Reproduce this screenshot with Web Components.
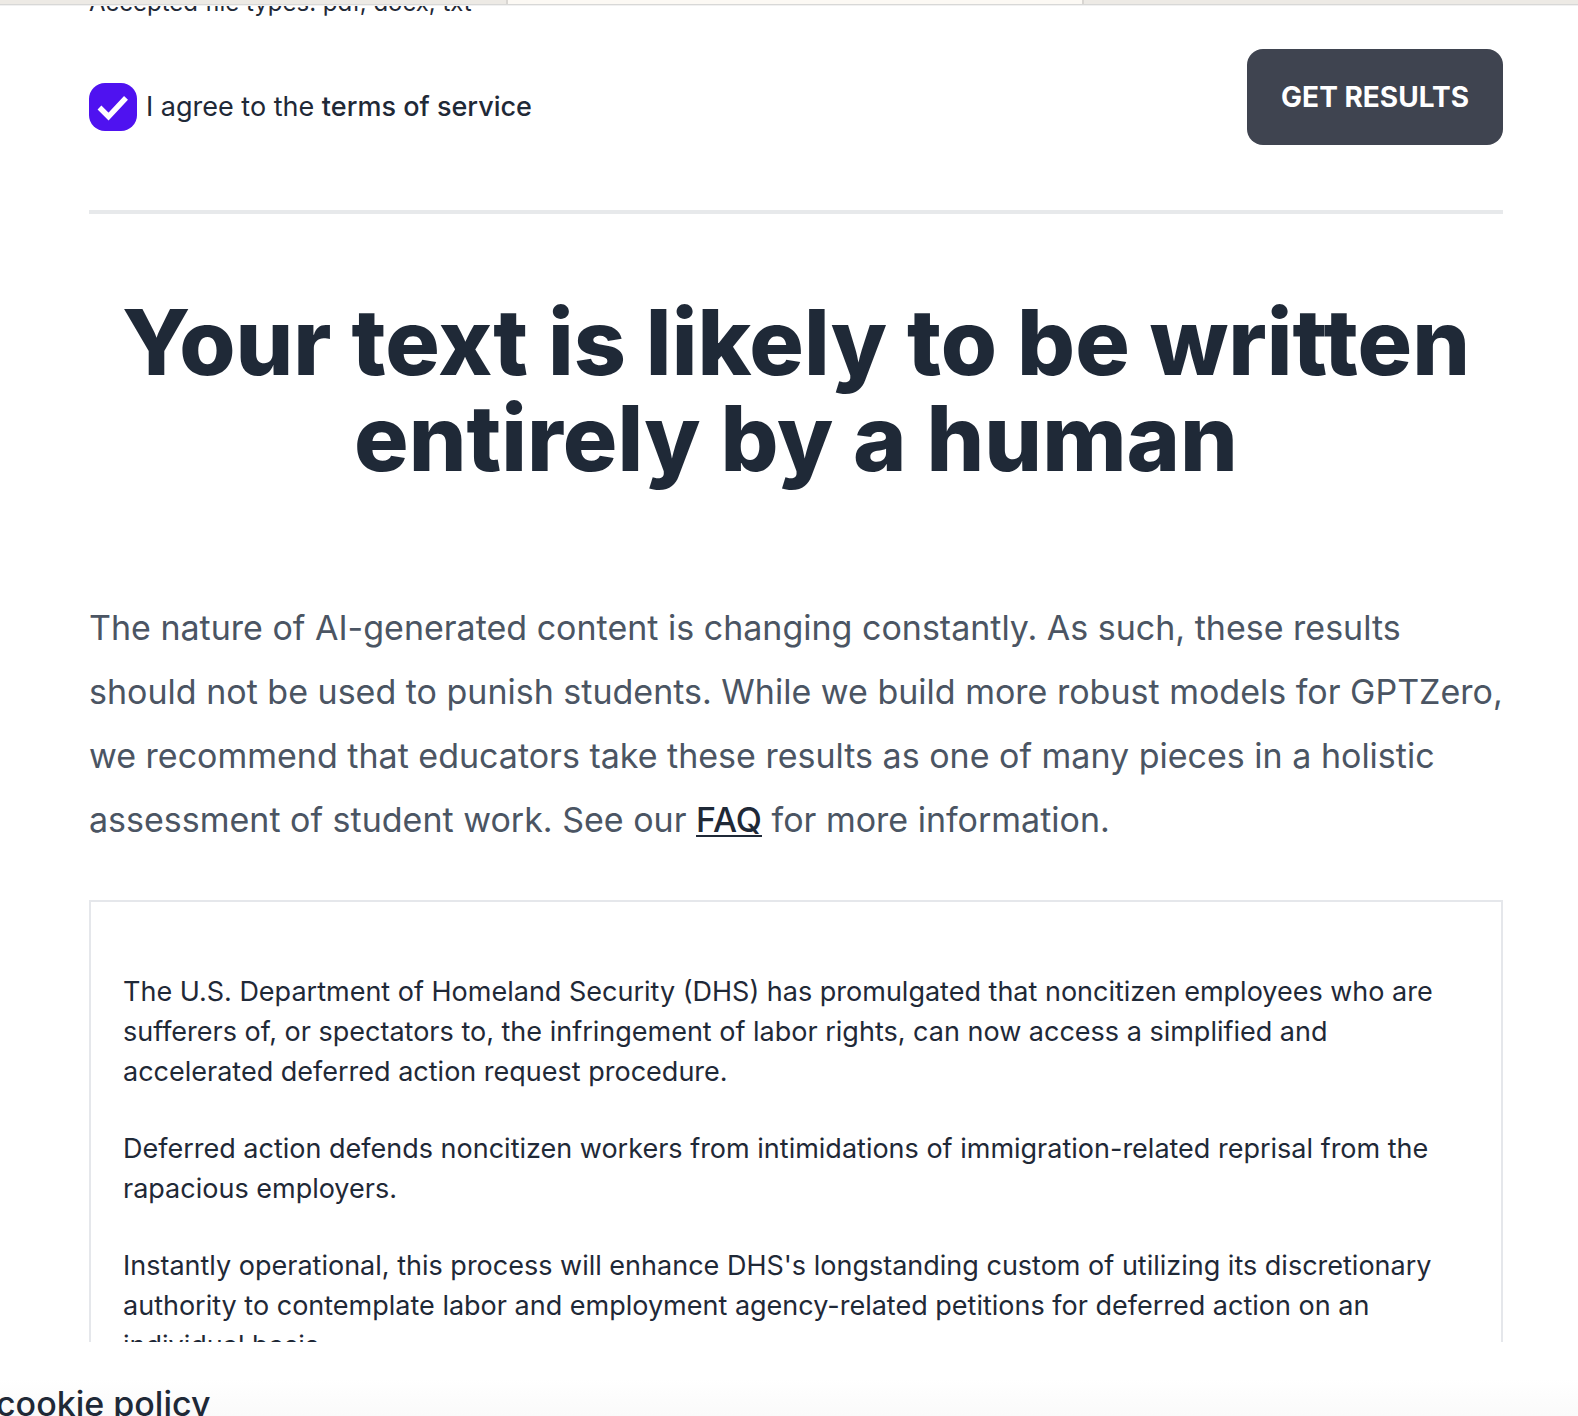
<!DOCTYPE html>
<html lang="en">
<head>
<meta charset="utf-8">
<title>Results</title>
<style>
html, body { margin: 0; height: 100%; }
body { background: #fff; color: #1f2937; font-family: Inter, "Liberation Sans", sans-serif; overflow: hidden; }
</style>
</head>
<body>
<results-page></results-page>
<script>
const define = (name, html) => customElements.define(name, class extends HTMLElement {
  constructor() {
    super();
    this.attachShadow({ mode: 'open' }).innerHTML = html;
  }
});

define('tab-strip', `
<style>
:host { display: grid; grid-template-columns: 506fr 578fr 494fr; flex: none; height: 4px; border-bottom: 1px solid #d8d8d7; box-shadow: 0 1px #f1f1f1; z-index: 1; }
.tab { background: #edeae5; }
.tab:first-child { background: linear-gradient(90deg, #efe9e3, #e3d9e3 35%, #e5dce4 60%, #edeae5 90%); }
.active { background: #fcf9f4; border: solid #d9d6d2; border-width: 0 2px; }
</style>
<div class="tab"></div><div class="tab active"></div><div class="tab"></div>`);

define('file-note', `
<style>
:host { display: flex; align-items: flex-end; height: 14px; overflow: hidden; font-size: 24px; line-height: 32px; }
</style>
<span><slot></slot></span>`);

define('terms-check', `
<style>
label { display: flex; align-items: center; gap: 9px; font-size: 27px; line-height: 40px; }
.box { display: grid; }
.box > * { grid-area: 1 / 1; }
input { appearance: none; margin: 0; width: 48px; height: 48px; border-radius: 16px; background: #4f12f0; }
svg { width: 48px; height: 48px; pointer-events: none; visibility: hidden; }
input:checked + svg { visibility: visible; }
a { color: inherit; font-weight: 500; text-decoration: none; }
</style>
<label>
  <span class="box"><input type="checkbox" checked><svg viewBox="0 0 48 48" fill="none" stroke="#fff" stroke-width="5.4"><path d="M10.5 24.5 19.5 33.5 37 14.8"/></svg></span>
  <span>I agree to the <a href="#terms">terms of service</a></span>
</label>`);

define('action-button', `
<style>
button { height: 96px; padding: 0 34px; border: 0; border-radius: 16px; background: #3f4450; color: #fff; font: 700 28px/40px Inter, sans-serif; text-transform: uppercase; white-space: nowrap; }
</style>
<button type="button"><slot></slot></button>`);

define('result-heading', `
<style>
h1 { margin: 0; font-size: 91px; line-height: 96px; font-weight: 800; text-align: center; }
</style>
<h1><slot></slot></h1>`);

define('result-notice', `
<style>
p { margin: 0; font-size: 34px; line-height: 64px; color: #4b5563; }
a { color: #1f2937; font-weight: 500; text-underline-offset: 3px; text-decoration-thickness: 2px; }
</style>
<p>The nature of AI-generated content is changing constantly. As such, these results should not be used to punish students. While we build more robust models for GPTZero, we recommend that educators take these results as one of many pieces in a holistic assessment of student work. See our <a href="#faq">FAQ</a> for more information.</p>`);

define('scanned-text', `
<style>
:host { display: block; border: 2px solid #e5e7eb; padding: 70px 32px; }
::slotted(p) { margin: 0 0 37px; font-size: 27px; line-height: 40px; }
</style>
<slot></slot>`);

define('cookie-bar', `
<style>
:host { display: flex; flex: none; height: 74px; overflow: hidden; box-sizing: border-box; padding-top: 38px; background: linear-gradient(#fff 50%, #fafafa); }
a { margin-left: -4px; color: inherit; font-size: 34px; line-height: 48px; font-weight: 500; text-decoration: none; white-space: nowrap; }
</style>
<a href="#cookies"><slot></slot></a>`);

define('results-page', `
<style>
:host { display: flex; flex-direction: column; height: 100vh; }
main { flex: 1; min-height: 0; overflow: hidden; padding: 0 75px 0 89px; }
.controls { display: flex; justify-content: space-between; align-items: flex-start; padding: 30px 0 65px; }
terms-check { display: block; padding-top: 34px; }
hr { margin: 0 0 80px; border: 0; height: 4px; background: #e7e9eb; }
result-heading, result-notice { display: block; }
result-notice { padding: 110px 0 48px; }
</style>
<tab-strip></tab-strip>
<main>
  <file-note>Accepted file types: pdf, docx, txt</file-note>
  <div class="controls">
    <terms-check></terms-check>
    <action-button>Get results</action-button>
  </div>
  <hr>
  <result-heading>Your text is likely to be written entirely by a human</result-heading>
  <result-notice></result-notice>
  <scanned-text>
    <p>The U.S. Department of Homeland Security (DHS) has promulgated that noncitizen employees who are sufferers of, or spectators to, the infringement of labor rights, can now access a simplified and accelerated deferred action request procedure.</p>
    <p>Deferred action defends noncitizen workers from intimidations of immigration-related reprisal from the rapacious employers.</p>
    <p>Instantly operational, this process will enhance DHS's longstanding custom of utilizing its discretionary authority to contemplate labor and employment agency-related petitions for deferred action on an individual basis.</p>
  </scanned-text>
</main>
<cookie-bar>cookie policy</cookie-bar>`);
</script>
</body>
</html>
